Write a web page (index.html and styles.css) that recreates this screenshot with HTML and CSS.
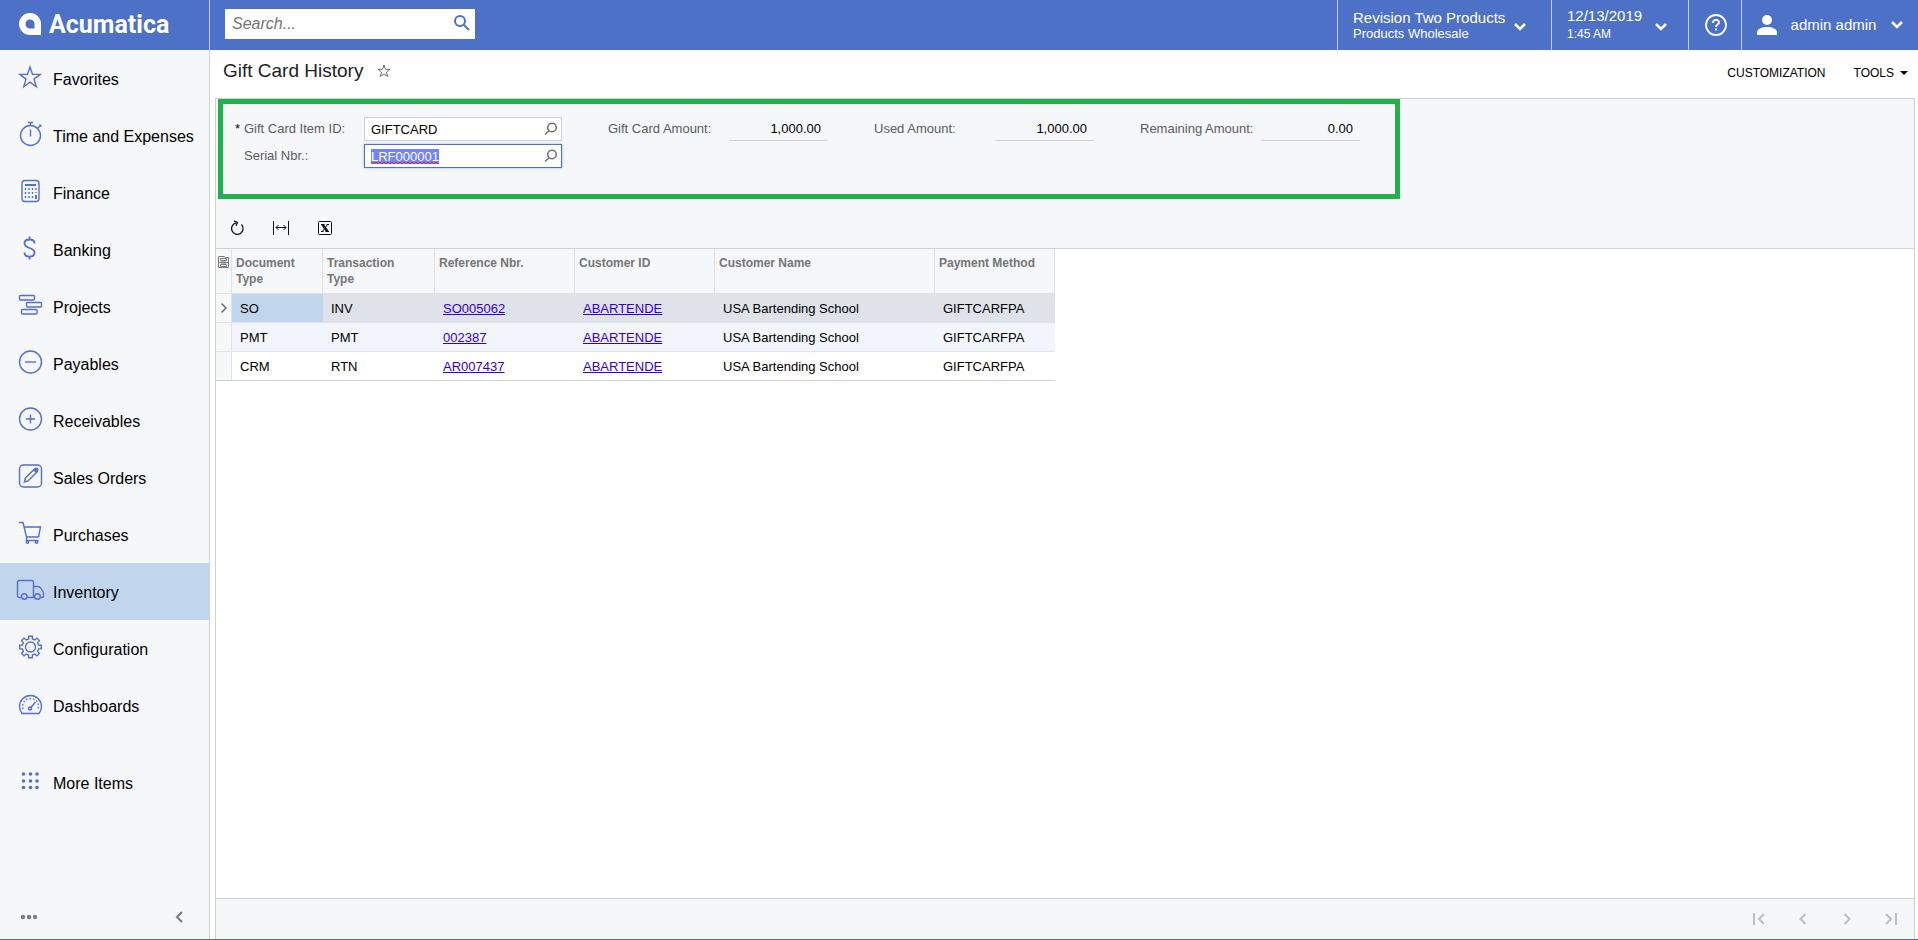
FILE: index.html
```html
<!DOCTYPE html>
<html lang="en">

<head>
  <meta charset="UTF-8">
  <meta name="viewport" content="width=device-width, initial-scale=1.0">
  <title>Gift Card History</title>
  <link rel="stylesheet" href="styles.css">
</head>

<body>
  <header class="topbar">
    <a class="logo" href="#">
      <svg width="22" height="22" viewBox="0 0 22 22"><path fill="#fff" fill-rule="evenodd" d="M11 0a11 11 0 0 1 11 11v11H11A11 11 0 0 1 11 0zM11 6.500c-3 0-4.500 2-4.500 4.500 0 2.700 2 4.500 4.500 4.500h4.500V11c0-2.500-1.800-4.500-4.500-4.500z"/></svg>
      <span>Acumatica</span>
    </a>
    <form class="search">
      <input type="text" placeholder="Search..." aria-label="Search">
      <button type="button" aria-label="Search">
        <svg width="18" height="18" viewBox="0 0 18 18" fill="none" stroke="#4e71c8" stroke-width="2"><circle cx="8" cy="7" r="5"/><path d="M11.700 10.700L17 16"/></svg>
      </button>
    </form>
    <button class="top-btn company">
      <span class="lines"><span class="big">Revision Two Products</span><span class="small">Products Wholesale</span></span>
      <svg width="14" height="10" viewBox="0 0 14 10"><path class="chev" d="M2 2l5 5 5-5"/></svg>
    </button>
    <button class="top-btn date">
      <span class="lines"><span class="big">12/13/2019</span><span class="small">1:45 AM</span></span>
      <svg width="14" height="10" viewBox="0 0 14 10"><path class="chev" d="M2 2l5 5 5-5"/></svg>
    </button>
    <button class="top-btn help" aria-label="Help">
      <svg width="24" height="24" viewBox="0 0 24 24" fill="none" stroke="#fff"><circle cx="12" cy="12" r="10" stroke-width="1.800"/><path stroke-width="1.800" d="M9 10c0-4 6-4 6-.500 0 2-3 2.200-3 4.500M12 15.500v2"/></svg>
    </button>
    <button class="top-btn user">
      <svg width="20" height="20" viewBox="0 0 20 20" fill="#fff"><circle cx="10" cy="5" r="5"/><path d="M0 20v-3c0-3 5-5 10-5s10 2 10 5v3z"/></svg>
      <span class="big">admin admin</span>
      <svg width="14" height="10" viewBox="0 0 14 10"><path class="chev" d="M2 2l5 5 5-5"/></svg>
    </button>
  </header>

  <div class="layout">
    <nav class="sidebar">
      <a class="item" href="#">
        <svg viewBox="0 0 28 28"><path d="M14 4l2.500 7.400h7.700l-6.200 4.700 2.300 7.600L14 19.200l-6.300 4.500L10 16.100l-6.200-4.700h7.700z"/></svg>
        Favorites
      </a>
      <a class="item" href="#">
        <svg viewBox="0 0 28 28"><circle cx="14.500" cy="15.500" r="10"/><path d="M14.500 9.500v7M12 2.500h5M14.500 2.500v3M21.500 8.500l3-3M23.500 4.500l2 2"/></svg>
        Time and Expenses
      </a>
      <a class="item" href="#">
        <svg viewBox="0 0 28 28"><rect x="6" y="3.500" width="17" height="21" rx="3"/><path stroke-width="2" d="M9 8h11"/><path stroke-dasharray="2 2" d="M9.500 11v11M13 11v11M16.500 11v11M20 11v5"/><path stroke-width="2" d="M20 18v4"/></svg>
        Finance
      </a>
      <a class="item" href="#">
        <svg viewBox="0 0 28 28"><path stroke-width="1.800" d="M18.500 9.500c0-3-2-4-5-4s-5 1.200-5 4c0 5.500 10 3.500 10 9 0 3-2 4.200-5 4.200s-5-1.500-5-4.200M13.500 2.500v3M13.500 22.500v3"/></svg>
        Banking
      </a>
      <a class="item" href="#">
        <svg viewBox="0 0 28 28"><rect x="3.500" y="4.500" width="15" height="4.500" rx="1"/><rect x="10.500" y="11.500" width="15" height="4.500" rx="1"/><rect x="5.500" y="18.500" width="15.500" height="4.500" rx="1"/></svg>
        Projects
      </a>
      <a class="item" href="#">
        <svg viewBox="0 0 28 28"><circle cx="14.500" cy="14" r="11"/><path d="M9 14h11"/></svg>
        Payables
      </a>
      <a class="item" href="#">
        <svg viewBox="0 0 28 28"><circle cx="14.500" cy="14" r="11"/><path d="M10 14h9M14.500 9.500v9"/></svg>
        Receivables
      </a>
      <a class="item" href="#">
        <svg viewBox="0 0 28 28"><rect x="3.500" y="3" width="22" height="22" rx="4"/><path d="M8.500 20l.8-3.800L18.500 7l2.700 2.700-9.200 9.200z"/><path fill="#566fcb" d="M18 8l1.500-1.500h2.200v2.200l-1.500 1.500z"/></svg>
        Sales Orders
      </a>
      <a class="item" href="#">
        <svg viewBox="0 0 28 28"><path d="M3 3.500h4l3.500 14.500h12M8 8h16.500L22.500 18M10.500 18v3.500h12"/><circle cx="11.500" cy="23" r="1.200"/><circle cx="20.500" cy="23" r="1.200"/></svg>
        Purchases
      </a>
      <a class="item active" href="#">
        <svg viewBox="0 0 28 28"><path d="M5 21.500H3.500Q1.500 21.500 1.500 19.500V6.500Q1.500 4.500 3.500 4.500H15.500Q17.500 4.500 17.500 6.500V21.500H11.500M17.500 10.500h4.500q2 0 3 2l2.500 4v3.500q0 1.500-1.500 1.500h-1M18.500 21.500h-1"/><circle cx="8.300" cy="20.500" r="2.800"/><circle cx="21.500" cy="20.500" r="2.800"/></svg>
        Inventory
      </a>
      <a class="item" href="#">
        <svg viewBox="0 0 28 28"><circle cx="14.500" cy="14" r="5"/><path d="M12.600 5.900L12.700 3.200H16.300L16.400 5.900L18.900 6.900L20.900 5.100L23.400 7.600L21.600 9.600L22.600 12.100L25.300 12.200V15.800L22.600 15.900L21.600 18.400L23.400 20.400L20.900 22.900L18.900 21.100L16.400 22.100L16.300 24.800H12.700L12.600 22.100L10.100 21.100L8.100 22.900L5.600 20.400L7.400 18.400L6.400 15.900L3.700 15.800V12.200L6.400 12.100L7.400 9.600L5.600 7.600L8.100 5.100L10.100 6.900Z"/></svg>
        Configuration
      </a>
      <a class="item" href="#">
        <svg viewBox="0 0 28 28"><path d="M6 23.500c-1.600-2-2.500-4.300-2.500-7a11 11 0 0 1 22 0c0 2.700-.9 5-2.500 7z"/><path stroke-dasharray="1.500 2" d="M7 19c-1.500-6 2-10.500 7.500-10.500S23.500 13 22 19"/><circle cx="14" cy="18.500" r="1.500"/><path d="M15 17.500l4.500-5.500"/></svg>
        Dashboards
      </a>
      <a class="item more" href="#">
        <svg viewBox="0 0 28 28"><g class="dots"><circle cx="7.500" cy="7" r="1.800"/><circle cx="14.500" cy="7" r="1.800"/><circle cx="21" cy="7" r="1.800"/><circle cx="7.500" cy="14" r="1.800"/><circle cx="14.500" cy="14" r="1.800"/><circle cx="21" cy="14" r="1.800"/><circle cx="7.500" cy="20.500" r="1.800"/><circle cx="14.500" cy="20.500" r="1.800"/><circle cx="21" cy="20.500" r="1.800"/></g></svg>
        More Items
      </a>
      <div class="sidebar-foot">
        <button aria-label="Menu"><svg width="18" height="12" viewBox="0 0 18 12" fill="#7b7b7b"><circle cx="3" cy="6" r="2.200"/><circle cx="9" cy="6" r="2.200"/><circle cx="15" cy="6" r="2.200"/></svg></button>
        <button aria-label="Collapse"><svg width="10" height="12" viewBox="0 0 10 12" fill="none" stroke="#7b7b7b" stroke-width="2"><path d="M8 1L3 6l5 5"/></svg></button>
      </div>
    </nav>

    <main class="main">
      <div class="title-row">
        <h1>Gift Card History</h1>
        <button class="fav" aria-label="Add to favorites">
          <svg width="14" height="14" viewBox="0 0 14 14" fill="none" stroke="#6e6e6e"><path d="M7 1l1.500 4.300H13L9.400 8l1.300 4.500L7 9.900l-3.700 2.600L4.600 8 1 5.300h4.500z"/></svg>
        </button>
        <div class="actions">
          <button>CUSTOMIZATION</button>
          <button>TOOLS <span class="caret"></span></button>
        </div>
      </div>

      <section class="panel">
        <form class="summary">
          <div class="lookups">
            <label for="itemId"><span class="req">*</span>Gift Card Item ID:</label>
            <div class="lookup">
              <input id="itemId" type="text" value="GIFTCARD" spellcheck="false">
              <button type="button" aria-label="Select item"><svg width="14" height="14" viewBox="0 0 14 14"><circle cx="8" cy="5.500" r="4.300"/><path d="M5 8.800L1 12.500"/></svg></button>
            </div>
            <label for="serial">Serial Nbr.:</label>
            <div class="lookup focused">
              <input id="serial" type="text" value="LRF000001" spellcheck="false">
              <button type="button" aria-label="Select serial"><svg width="14" height="14" viewBox="0 0 14 14"><circle cx="8" cy="5.500" r="4.300"/><path d="M5 8.800L1 12.500"/></svg></button>
            </div>
          </div>
          <div class="amount">
            <label for="cardAmount">Gift Card Amount:</label>
            <input id="cardAmount" type="text" value="1,000.00" readonly>
          </div>
          <div class="amount">
            <label for="usedAmount">Used Amount:</label>
            <input id="usedAmount" type="text" value="1,000.00" readonly>
          </div>
          <div class="amount">
            <label for="remAmount">Remaining Amount:</label>
            <input id="remAmount" type="text" value="0.00" readonly>
          </div>
        </form>

        <div class="toolbar">
          <button aria-label="Refresh"><svg width="16" height="16" viewBox="0 0 16 16" fill="none" stroke="#111" stroke-width="1.300"><path d="M12.500 4.500a5.800 5.800 0 1 1-5-1.700"/><path d="M5 .8l3.500 1.700-1.500 3.200"/></svg></button>
          <button aria-label="Fit to screen"><svg width="16" height="16" viewBox="0 0 16 16" fill="none" stroke="#111"><path d="M.5 1v14M15.500 1v14"/><path d="M3 7.500h10M5.500 5L3 7.500 5.500 10M10.500 5L13 7.500 10.500 10"/></svg></button>
          <button aria-label="Export to Excel"><svg width="16" height="16" viewBox="0 0 16 16" fill="none" stroke="#111"><rect x="1.500" y="1.500" width="13" height="13" rx="1"/><path stroke-width="2.600" d="M5.500 4.500l5 7"/><path d="M10.500 4.500l-5 7M4 4.500h3.500M9.500 4.500h2.500M4 11.500h2.500M8.500 11.500h3.500"/></svg></button>
        </div>

        <div class="grid-area">
          <table class="grid">
            <colgroup>
              <col class="c-mark"><col class="c-doc"><col class="c-tran"><col class="c-ref"><col class="c-cust"><col class="c-name"><col class="c-pay">
            </colgroup>
            <thead>
              <tr>
                <th class="mark"><svg width="11" height="12" viewBox="0 0 11 12" fill="none" stroke="#7b7b7b"><path d="M.5 11.500v-11h6l1 1h3v10zM2.500 2.500h6v2h-6zM2.500 8.500h6v2h-6zM1 6.500h9"/><path stroke-width="2" d="M3 6.500h5"/></svg></th>
                <th>Document Type</th>
                <th>Transaction Type</th>
                <th>Reference Nbr.</th>
                <th>Customer ID</th>
                <th>Customer Name</th>
                <th>Payment Method</th>
              </tr>
            </thead>
            <tbody>
              <tr class="selected">
                <td class="mark"><svg width="8" height="10" viewBox="0 0 8 10" fill="none" stroke="#6e6e6e" stroke-width="1.500"><path d="M1.500.5L6 5 1.500 9.500"/></svg></td>
                <td class="current">SO</td>
                <td>INV</td>
                <td><a href="#">SO005062</a></td>
                <td><a href="#">ABARTENDE</a></td>
                <td>USA Bartending School</td>
                <td>GIFTCARFPA</td>
              </tr>
              <tr class="alt">
                <td class="mark"></td>
                <td>PMT</td>
                <td>PMT</td>
                <td><a href="#">002387</a></td>
                <td><a href="#">ABARTENDE</a></td>
                <td>USA Bartending School</td>
                <td>GIFTCARFPA</td>
              </tr>
              <tr>
                <td class="mark"></td>
                <td>CRM</td>
                <td>RTN</td>
                <td><a href="#">AR007437</a></td>
                <td><a href="#">ABARTENDE</a></td>
                <td>USA Bartending School</td>
                <td>GIFTCARFPA</td>
              </tr>
            </tbody>
          </table>
        </div>

        <div class="pager">
          <button aria-label="First page"><svg width="14" height="12" viewBox="0 0 14 12"><path d="M2 0v12M12 1L7 6l5 5"/></svg></button>
          <button aria-label="Previous page"><svg width="14" height="12" viewBox="0 0 14 12"><path d="M9.500 1l-5 5 5 5"/></svg></button>
          <button aria-label="Next page"><svg width="14" height="12" viewBox="0 0 14 12"><path d="M4.500 1l5 5-5 5"/></svg></button>
          <button aria-label="Last page"><svg width="14" height="12" viewBox="0 0 14 12"><path d="M2 1l5 5-5 5M12 0v12"/></svg></button>
        </div>
      </section>
    </main>
  </div>

  <script>
    const serial = document.querySelector('#serial')
    serial.focus()
    serial.select()
  </script>
</body>

</html>
```
FILE: styles.css
```css
* {
  box-sizing: border-box;
}

html,
body {
  height: 100%;
  margin: 0;
}

body {
  display: flex;
  flex-direction: column;
  font-family: Arial, "Liberation Sans", sans-serif;
  font-size: 13px;
  color: #000;
  background: #fff;
  border-bottom: 1px solid #4e71c8;
}

button,
input {
  font: inherit;
  color: inherit;
  margin: 0;
  padding: 0;
  border: 0;
  background: none;
  outline: none;
}

svg {
  display: block;
  flex: none;
}

/* top bar */
.topbar {
  display: flex;
  flex: none;
  height: 50px;
  background: #4e71c8;
  color: #fff;
}

.logo {
  display: flex;
  align-items: center;
  gap: 8px;
  width: 210px;
  padding: 0 0 2px 19px;
  border-right: 1px solid #c1d0ee;
  color: #fff;
  font-family: Roboto, sans-serif;
  font-size: 25px;
  font-weight: bold;
  text-decoration: none;
}

.search {
  display: flex;
  align-items: center;
  width: 250px;
  height: 30px;
  margin: 9px auto 0 15px;
  padding: 0 5px 0 7px;
  background: #fff;
}

.search input {
  flex: 1;
  min-width: 0;
  height: 28px;
  font-size: 16px;
  color: #000;
}

.search input::placeholder {
  font-style: italic;
  color: #757575;
}

.search button {
  margin-bottom: 2px;
}

.top-btn {
  display: flex;
  align-items: center;
  padding: 0 15px;
  border-left: 1px solid #c1d0ee;
  text-align: left;
}

.top-btn .chev {
  fill: none;
  stroke: #fff;
  stroke-width: 2.500px;
}

.lines {
  display: flex;
  flex-direction: column;
}

.lines + svg {
  margin-top: 4px;
}

.big {
  font-size: 15px;
  line-height: 18px;
}

.small {
  font-size: 13px;
  line-height: 14px;
}

.company {
  width: 214px;
  justify-content: space-between;
  padding-right: 24px;
}

.date {
  width: 137px;
  justify-content: space-between;
  padding-right: 20px;
}

.date .lines {
  gap: 2px;
  padding-bottom: 2px;
}

.date .small {
  font-size: 12px;
}

.help {
  width: 53px;
}

.user {
  width: 177px;
  justify-content: space-between;
  padding-right: 14px;
}

/* sidebar */
.layout {
  display: flex;
  flex: 1;
  min-height: 0;
}

.sidebar {
  display: flex;
  flex-direction: column;
  flex: none;
  width: 210px;
  background: #f5f7f9;
  border-right: 1px solid #cfd1d4;
}

.item {
  display: flex;
  align-items: center;
  gap: 9px;
  height: 57px;
  padding: 2px 0 0 16px;
  color: #000;
  font-size: 16px;
  text-decoration: none;
}

.item svg {
  width: 28px;
  height: 28px;
  margin-bottom: 5px;
  fill: none;
  stroke: #566fcb;
  stroke-width: 1.400px;
}

.item .dots {
  fill: #566fcb;
  stroke: none;
}

.item.active {
  background: #c1d5ed;
}

.item.more {
  margin-top: 20px;
}

.sidebar-foot {
  display: flex;
  justify-content: space-between;
  margin-top: auto;
  padding: 0 25px 16px 20px;
}

/* main */
.main {
  display: flex;
  flex-direction: column;
  flex: 1;
  min-width: 0;
  padding: 0 3px 0 5px;
}

.title-row {
  display: flex;
  align-items: center;
  height: 48px;
  padding: 0 7px 6px 8px;
}

h1 {
  margin: 0 14px 0 0;
  font-size: 19px;
  font-weight: normal;
  color: #222;
}

.actions {
  display: flex;
  gap: 28px;
  margin: 4px 0 0 auto;
  font-size: 12px;
}

.actions button {
  display: flex;
  align-items: center;
  gap: 6px;
}

.caret {
  border: 4px solid transparent;
  border-top-color: #000;
  border-bottom: 0;
}

.panel {
  display: flex;
  flex-direction: column;
  flex: 1;
  min-height: 0;
  border: 1px solid #cfd1d4;
  border-bottom: 0;
  background: #f5f7f9;
}

.summary {
  display: flex;
  align-items: flex-start;
  gap: 46px;
  width: 1182px;
  height: 100px;
  margin-left: 2px;
  padding: 13px 0 0 12px;
  border: 5px solid #22b14c;
}

.summary label {
  color: #5c5c5c;
  line-height: 23px;
}

.lookups {
  display: grid;
  grid-template-columns: 129px 198px;
  gap: 3px 0;
}

.lookups label {
  padding-left: 9px;
}

.req {
  display: inline-block;
  width: 9px;
  margin-left: -9px;
  color: #000;
}

.lookup {
  position: relative;
  display: flex;
  align-items: center;
  height: 24px;
  padding: 0 3px 0 6px;
  border: 1px solid #cfd1d4;
  background: #fff;
}

.lookup.focused {
  border-color: #4e71c8;
  box-shadow: 0 0 3px #a9bbe6;
}

/* spelling mark over the selected value */
.lookup.focused::after {
  content: "";
  position: absolute;
  left: 6px;
  bottom: 3px;
  width: 68px;
  height: 2px;
  background:
    repeating-linear-gradient(90deg, #d22b4a 0 2px, transparent 2px 4px) 0 0 / 100% 1px no-repeat,
    repeating-linear-gradient(90deg, transparent 0 2px, #d22b4a 2px 4px) 0 1px / 100% 1px no-repeat;
  pointer-events: none;
}

.lookup input {
  flex: 1;
  min-width: 0;
  height: 22px;
}

.lookup input::selection {
  background: #7382fc;
  color: #fff;
}

.lookup svg {
  fill: none;
  stroke: #6e6e6e;
  stroke-width: 1.500px;
}

.amount {
  display: grid;
  grid-template-columns: 121px 99px;
}

.amount input {
  width: 100%;
  height: 24px;
  padding-right: 7px;
  border-bottom: 1px solid #cfd1d4;
  text-align: right;
}

.toolbar {
  display: flex;
  align-items: center;
  gap: 28px;
  height: 49px;
  padding: 8px 0 0 13px;
}

.grid-area {
  flex: 1;
  border-top: 1px solid #cfd1d4;
  border-bottom: 1px solid #cfd1d4;
  background: #fff;
}

.grid {
  width: 839px;
  table-layout: fixed;
  border-collapse: separate;
  border-spacing: 0;
}

.c-mark { width: 16px; }
.c-doc { width: 91px; }
.c-tran { width: 112px; }
.c-ref { width: 140px; }
.c-cust { width: 140px; }
.c-name { width: 220px; }
.c-pay { width: 120px; }

.grid th {
  height: 45px;
  padding: 6px 12px 0 4px;
  border-right: 1px solid #dfe1e6;
  border-bottom: 1px solid #dfe1e6;
  background: #f5f7f9;
  color: #767676;
  font-size: 12px;
  line-height: 16px;
  text-align: left;
  vertical-align: top;
}

.grid td {
  height: 29px;
  padding: 0 8px;
  border-bottom: 1px solid #dfe3e8;
}

.grid tr:last-child td {
  border-bottom-color: #cfd1d4;
}

.grid a {
  color: #3300dd;
}

.grid .selected td {
  background: #dfe2e8;
}

.grid .alt td {
  background: #f2f6fc;
}

.grid .selected .current {
  background: #c1d5ed;
}

.grid .mark,
.grid .selected .mark,
.grid .alt .mark {
  padding-left: 2px;
  padding-right: 0;
  border-right: 1px solid #dfe1e6;
  background: #f5f7f9;
}

.grid td.mark svg {
  margin-left: 2px;
}

.grid th.mark svg {
  margin-top: 1px;
}

.pager {
  display: flex;
  justify-content: flex-end;
  height: 40px;
  padding-right: 1px;
}

.pager button {
  display: flex;
  align-items: center;
  justify-content: center;
  width: 44px;
}

.pager svg {
  fill: none;
  stroke: #bdbfc2;
  stroke-width: 2px;
}
```
